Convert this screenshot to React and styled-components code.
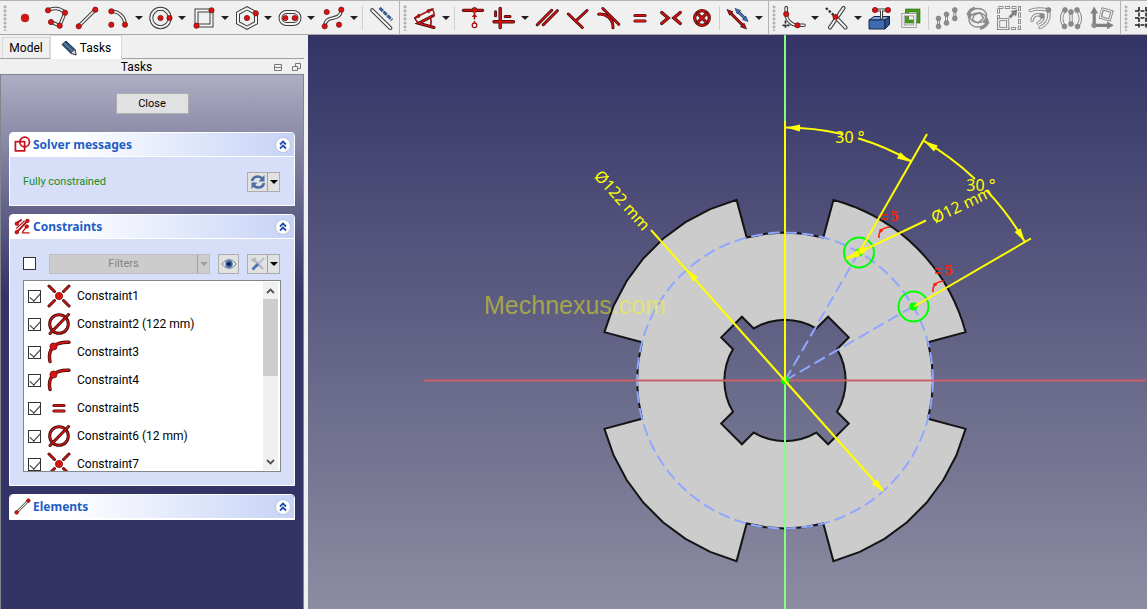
import React, { useState } from 'react';
import styled, { createGlobalStyle } from 'styled-components';

const GlobalStyle = createGlobalStyle`
  * {
    box-sizing: border-box;
  }

  html,
  body,
  #root {
    height: 100%;
    margin: 0;
  }

  body {
    overflow: hidden;
    background: #f0f0f0;
    color: #000;
    font-family: Roboto, 'Noto Sans', sans-serif;
    font-size: 11px;
    line-height: 16px;
  }

  button,
  input {
    font: inherit;
    color: inherit;
    margin: 0;
    padding: 0;
  }
`;

const Window = styled.div`
  display: flex;
  flex-direction: column;
  height: 100vh;
`;

/* ---------- toolbar ---------- */

const Toolbar = styled.header`
  display: flex;
  flex: none;
  height: 35px;
  overflow: hidden;
  border-top: 1px solid #b4b4b4;
  border-bottom: 1px solid #a8a8a8;
`;

const ToolGroup = styled.div`
  display: flex;
  flex: none;
  align-items: center;
  padding-right: 3px;
  border-right: 1px solid #b4b4b4;
`;

const Handle = styled.span`
  width: 9px;
  height: 26px;
  background: radial-gradient(circle at 5px 2px, #b4b4b4 1px, transparent 2px) 0 0 / 9px 4px;
`;

const ToolButton = styled.button`
  display: flex;
  flex: none;
  align-items: center;
  justify-content: center;
  width: 31px;
  height: 30px;
  border: 0;
  background: none;
`;

const ArrowButton = styled.button`
  display: flex;
  flex: none;
  align-items: center;
  justify-content: center;
  width: 12px;
  height: 30px;
  border: 0;
  background: none;

  &::before {
    content: '';
    border: 4px solid transparent;
    border-top-color: #202020;
    border-bottom: 0;
  }
`;

const ToolSeparator = styled.span`
  width: 1px;
  height: 24px;
  margin: 0 2px;
  background: #cfcfcf;
`;

const Main = styled.div`
  display: flex;
  flex: 1;
  min-height: 0;
`;

/* ---------- side panel ---------- */

const Sidebar = styled.aside`
  display: flex;
  flex: none;
  flex-direction: column;
  width: 304px;
`;

const Tabs = styled.div`
  display: flex;
  align-items: flex-end;
  height: 24px;
  padding-left: 2px;
  border-bottom: 1px solid #a0a0a0;
`;

const Tab = styled.button`
  display: flex;
  align-items: center;
  justify-content: center;
  gap: 3px;
  width: ${(p) => (p.$active ? '72px' : '48px')};
  height: ${(p) => (p.$active ? '24px' : '21px')};
  margin-bottom: ${(p) => (p.$active ? '-1px' : '0')};
  border: 1px solid #d9d9d9;
  border-bottom: 0;
  background: ${(p) => (p.$active ? '#fff' : '#f0f0f0')};
  font-size: 12px;
`;

const DockTitle = styled.div`
  display: grid;
  grid-template-columns: 1fr 30px;
  align-items: center;
  height: 15px;
  padding-right: 1px;
  font-size: 12px;
  text-align: center;
`;

const DockButtons = styled.div`
  display: flex;
  justify-content: space-between;
  height: 13px;
`;

const DockButton = styled.button`
  display: flex;
  align-items: center;
  width: 11px;
  border: 0;
  background: none;
`;

const TaskArea = styled.div`
  display: flex;
  flex: 1;
  flex-direction: column;
  gap: 8px;
  min-height: 0;
  padding: 18px 8px 0;
  border: 1px solid #84848c;
  border-bottom: 0;
  background: linear-gradient(#adadc3, #333366 220px);
`;

const CloseButton = styled.button`
  align-self: center;
  width: 73px;
  height: 21px;
  margin-bottom: 10px;
  border: 1px solid #adadad;
  background: #e1e1e1;
`;

const TaskBox = styled.section`
  border: 1px solid #fff;
  border-radius: 4px 4px 0 0;
  overflow: hidden;
  background: #d6dff7;
`;

const TaskHeader = styled.h2`
  display: flex;
  align-items: center;
  gap: 2px;
  height: 24px;
  margin: 0;
  padding: 0 3px 0 4px;
  border-bottom: 1px solid #fff;
  background: linear-gradient(90deg, #fff 20%, #c6d3f7);
  color: #215dc6;
  font-family: 'Noto Sans', sans-serif;
  font-size: 12px;
  font-weight: bold;
`;

const FoldButton = styled.button`
  display: flex;
  align-items: center;
  justify-content: center;
  width: 16px;
  height: 16px;
  margin-left: auto;
  border: 1px solid #b8c2e0;
  border-radius: 50%;
  background: #fff;
`;

const TaskBody = styled.div`
  padding: 14px 13px 13px;
`;

const Row = styled.div`
  display: flex;
  align-items: center;
  justify-content: space-between;
  min-height: 21px;
  padding-right: 1px;
`;

const SolverText = styled.p`
  margin: 0;
  color: #1c8a1c;
`;

const SplitButton = styled.div`
  display: flex;
  flex: none;
  width: 33px;
  height: 20px;
  border: 1px solid #adadad;
  background: #e1e1e1;
`;

const SplitMain = styled.button`
  display: flex;
  flex: 1;
  align-items: center;
  justify-content: center;
  border: 0;
  background: none;
`;

const SplitArrow = styled.button`
  display: flex;
  align-items: center;
  justify-content: center;
  width: 12px;
  border: 0;
  border-left: 1px solid #a0a0a0;
  background: none;

  &::before {
    content: '';
    border: 4px solid transparent;
    border-top-color: ${(p) => (p.disabled ? '#a0a0a0' : '#000')};
    border-bottom: 0;
  }
`;

const FilterBar = styled(Row)`
  margin-bottom: 6px;
`;

const FilterSplit = styled.div`
  display: flex;
  width: 161px;
  height: 20px;
  margin-left: 5px;
  border: 1px solid #bfbfbf;
  background: #cccccc;
  color: #838383;
`;

const EyeButton = styled.button`
  display: flex;
  align-items: center;
  justify-content: center;
  width: 21px;
  height: 20px;
  border: 1px solid #adadad;
  background: #e1e1e1;
`;

const Check = styled.input.attrs({ type: 'checkbox' })`
  appearance: none;
  display: flex;
  flex: none;
  justify-content: center;
  width: 13px;
  height: 13px;
  border: 1px solid #333;
  background: #fff;

  &:checked::before {
    content: '';
    width: 5px;
    height: 9px;
    border: solid #333;
    border-width: 0 1px 1px 0;
    transform: rotate(42deg);
  }
`;

const ListFrame = styled.div`
  display: flex;
  height: 192px;
  border: 1px solid #828790;
  background: #fff;
`;

const List = styled.ul`
  flex: 1;
  margin: 0;
  padding: 1px 0 0 4px;
  overflow: hidden;
  list-style: none;
`;

const ListRow = styled.label`
  display: flex;
  align-items: center;
  height: 28px;
  font-size: 12px;

  svg {
    margin: 0 6px;
  }
`;

const ScrollBar = styled.div`
  display: flex;
  flex-direction: column;
  width: 15px;
  margin: 1px 2px 1px 0;
  background: #f0f0f0;
`;

const ScrollButton = styled.button`
  display: flex;
  align-items: center;
  justify-content: center;
  height: 17px;
  border: 0;
  background: #f0f0f0;
`;

const Thumb = styled.div`
  height: 77px;
  margin-bottom: auto;
  background: #cdcdcd;
`;

const Viewport = styled.main`
  flex: 1;
  min-width: 0;
  margin-left: 4px;
  background: linear-gradient(#333366, #8c8ca2);
`;

const Drawing = styled.svg`
  display: block;
  width: 100%;
  height: 100%;
`;

const DimText = styled.text`
  fill: #ffff00;
  font-family: 'Noto Sans', sans-serif;
  font-size: 16px;
  text-anchor: middle;
`;

const MarkText = styled.text`
  fill: #ff2200;
  font-family: 'DejaVu Serif', serif;
  font-size: 13px;
  font-weight: bold;
`;

const Watermark = styled.text`
  fill: #ffff00;
  fill-opacity: 0.45;
  font-family: 'Liberation Sans', Arial, sans-serif;
  font-size: 25px;
`;

/* ---------- icon pieces ---------- */

const Icon = ({ size = 24, children }) => (
  <svg width={size} height={size} viewBox="0 0 24 24" fill="none" aria-hidden="true">
    {children}
  </svg>
);

// thick red stroke with a dark edge
const Red = ({ d, w = 3 }) => (
  <>
    <path d={d} stroke="#3a0808" strokeWidth={w} strokeLinecap="round" />
    <path d={d} stroke="#d01414" strokeWidth={w - 1.4} strokeLinecap="round" />
  </>
);

// hollow geometry stroke
const Bar = ({ d, w = 3.6, edge = '#3c3e3c', fill = '#f4f4f4' }) => (
  <>
    <path d={d} stroke={edge} strokeWidth={w} strokeLinecap="round" />
    <path d={d} stroke={fill} strokeWidth={w - 2} strokeLinecap="round" />
  </>
);

const Dots = ({ at, r = 2.6, fill = '#dc1212', edge = '#7a1010' }) =>
  at.map(([x, y]) => <circle key={`${x}-${y}`} cx={x} cy={y} r={r} fill={fill} stroke={edge} strokeWidth="0.8" />);

const Gray = ({ at }) => <Dots at={at} r={2.4} fill="#8c8c8c" edge="#808080" />;

const ICONS = {
  point: <circle cx="12" cy="12" r="4" fill="#d01212" stroke="#b03030" strokeWidth="0.6" />,
  polyline: (
    <>
      <Bar d="M4 4.3C9 1.5 16 1.6 21 6.7L15.7 19.7L7 16" />
      <Dots at={[[4, 4.3], [21, 6.7], [15.7, 19.7], [7, 16]]} />
    </>
  ),
  line: (
    <>
      <Bar d="M3.7 20.3L20.3 3.7" />
      <Dots at={[[3.7, 20.3], [20.3, 3.7]]} />
    </>
  ),
  arc: (
    <>
      <Bar d="M5.3 5.3C13 5.3 19 11 19 18.7" />
      <Dots at={[[5.3, 5.3], [5.3, 18.7], [19, 18.7]]} />
    </>
  ),
  circle: (
    <>
      <Bar d="M2.3 12a9.2 9.2 0 1 0 18.4 0a9.2 9.2 0 1 0 -18.4 0" w={4} />
      <Dots at={[[11.5, 12], [20.5, 12]]} />
    </>
  ),
  square: (
    <>
      <Bar d="M4.5 4.5H19.5V19.5H4.5Z" w={4} />
      <Dots at={[[19.5, 4.3], [4.5, 19.7]]} />
    </>
  ),
  hexagon: (
    <>
      <Bar d="M12 2.3L21 7.2V16.8L12 21.7L3 16.8V7.2Z" w={4} />
      <Dots at={[[12, 12], [20.8, 7.3]]} />
    </>
  ),
  slot: (
    <>
      <Bar d="M8.5 6H15.5a6 6 0 0 1 0 12H8.5a6 6 0 0 1 0 -12Z" w={4} />
      <Dots at={[[7.3, 12], [16.7, 12]]} />
    </>
  ),
  spline: (
    <>
      <Bar d="M3.7 20.3C5 7 19 17 20.3 3.7" />
      <Dots at={[[3.7, 20.3], [5.7, 6], [20.3, 3.7], [18, 18.7]]} />
    </>
  ),
  construction: (
    <>
      <Bar d="M3.2 4.2L21.3 22" w={4} />
      <path d="M10.7 2L23 14" stroke="#1c3560" strokeWidth="2.8" strokeDasharray="4.4 1" />
      <path d="M10.7 2L23 14" stroke="#3f6fb5" strokeWidth="1.4" strokeDasharray="4.4 1" />
    </>
  ),
  dimension: (
    <>
      <path d="M1.5 12L19.5 3M1.5 12L5 17M19.5 3L21.5 8" stroke="#a01010" strokeWidth="1.4" />
      <path d="M1 12.5L6 7.8L7 11Z M20.5 2.6L13.8 4L15.4 7Z" fill="#c01010" stroke="#5a0808" strokeWidth="0.6" />
      <path d="M17.5 11.5Q18.8 15.5 17.5 20" stroke="#a01010" strokeWidth="1.6" />
      <Red d="M20.5 9.5L5.5 17.3L21 21.5" />
    </>
  ),
  pointOnLine: (
    <>
      <path d="M13.5 7V16.5" stroke="#8a1010" strokeWidth="1.4" strokeDasharray="2.5 1.5" />
      <path d="M13.5 7.2L10.8 11H16.2Z" fill="#c01010" />
      <circle cx="13.5" cy="19.3" r="2.3" fill="#fff" stroke="#a01414" strokeWidth="1.3" />
      <Red d="M2.5 4.3H21.5" w={3.2} />
      <Dots at={[[13.5, 4]]} />
    </>
  ),
  horVer: (
    <>
      <Red d="M8.2 2.5V21.5M2 15.7H21.5" w={3.4} />
      <Red d="M3.5 5.8V9.8M13.2 10.5H18" />
    </>
  ),
  parallel: <Red d="M2.3 18.7L16.7 4.3M8.3 18.7L22.3 4.7" />,
  perpendicular: <Red d="M2.3 8L16.3 21.5M9.8 15L21 4.5" />,
  tangent: <Red d="M1.7 8.2C8 7.5 16.5 12 16 21.8M5.8 2.5L21.8 18.3" />,
  equal: <Red d="M7 9.5H17M7 15H17" w={3.2} />,
  symmetric: <Red d="M2.7 6.5L9.2 12L2.7 17.5M21.3 6.5L14.8 12L21.3 17.5" w={3.2} />,
  block: (
    <>
      <circle cx="12" cy="12" r="7.3" stroke="#3a0808" strokeWidth="3.2" />
      <circle cx="12" cy="12" r="7.3" stroke="#d01414" strokeWidth="1.8" />
      <Red d="M7.6 7.6L16.4 16.4M16.4 7.6L7.6 16.4" />
    </>
  ),
  toggle: (
    <>
      <Red d="M3.5 6L18 20.5" />
      <path d="M1 3.5L7 5.8L3.6 9.2Z M20.5 23L14.5 20.8L18 17.2Z" fill="#c01212" stroke="#3a0808" strokeWidth="0.7" />
      <path d="M11.5 5L19.5 13" stroke="#1c3560" strokeWidth="3" />
      <path d="M11.5 5L19.5 13" stroke="#5580c0" strokeWidth="1.6" />
      <path d="M9 2.5L14.5 4.4L11.2 7.7Z M22 15.5L16.5 13.6L19.8 10.3Z" fill="#4474b8" stroke="#1c3560" strokeWidth="0.7" />
    </>
  ),
  fillet: (
    <>
      <Bar d="M4.2 1.7V8C4.5 14 9 19 15.5 19.3H22" />
      <path d="M3.5 14.5V23M0.5 19.3H9" stroke="#303030" strokeWidth="1.8" strokeDasharray="3 1.2" />
      <Dots at={[[4.2, 8], [15.5, 19.3]]} />
    </>
  ),
  trim: (
    <>
      <path d="M1 2L10 10.5" stroke="#303030" strokeWidth="2.4" strokeDasharray="2.4 1.6" />
      <Bar d="M18.5 2L5 21.5M10.5 11L20.5 21.5" w={4} />
      <Dots at={[[10.5, 11]]} />
    </>
  ),
  external: (
    <>
      <path d="M1 14L6 10.5H21.5L17 14Z" fill="#7fa6da" stroke="#15294d" />
      <path d="M1 14H17V23H1Z" fill="#3f6cb0" stroke="#15294d" />
      <path d="M17 14L21.5 10.5V18.5L17 23Z" fill="#2c4f87" stroke="#15294d" />
      <Bar d="M7 4H20M13.5 4V12" w={3} />
      <Dots at={[[7, 4], [20, 4]]} />
    </>
  ),
  carbonCopy: (
    <>
      <rect x="8" y="4.5" width="11.5" height="11" stroke="#2c6a10" strokeWidth="3.6" />
      <rect x="8" y="4.5" width="11.5" height="11" stroke="#45a01c" strokeWidth="2.2" />
      <rect x="4" y="8.7" width="12" height="11.5" stroke="#8a8a8a" strokeWidth="3.2" />
      <rect x="4" y="8.7" width="12" height="11.5" stroke="#f4f4f4" strokeWidth="1.6" />
    </>
  ),
  copies: (
    <>
      <Bar d="M3.5 12V20.5M11.5 8V17M19.8 4V12.5" w={3} edge="#8c8c8c" />
      <Gray at={[[3.5, 12.5], [3.5, 20.5], [11.5, 8.3], [11.5, 17], [19.8, 4], [19.8, 12.5]]} />
    </>
  ),
  rotate: (
    <>
      <ellipse cx="12" cy="9.5" rx="8.5" ry="7" stroke="#8c8c8c" strokeWidth="1.4" />
      <ellipse cx="12" cy="14" rx="9" ry="7" stroke="#8c8c8c" strokeWidth="1.4" />
      <path d="M8 9L14 6.5L17.5 12L12 17L6.5 14Z" stroke="#8c8c8c" strokeWidth="1.4" />
      <path d="M2 8Q4 2.5 9 2M22 16Q20 21.5 14 22.5" stroke="#8c8c8c" strokeWidth="2.4" />
      <path d="M0.5 7L7.5 8L2.5 13Z M23.5 17.5L16.5 17L21.5 11.5Z" fill="#8c8c8c" />
    </>
  ),
  scale: (
    <>
      <rect x="1.5" y="1.5" width="21" height="21" stroke="#8c8c8c" strokeWidth="3" strokeDasharray="5 1.5" />
      <rect x="1.5" y="1.5" width="21" height="21" stroke="#f4f4f4" strokeWidth="1" strokeDasharray="3.5 3" strokeDashoffset="-0.8" />
      <rect x="1.7" y="13.5" width="9" height="9" fill="#f0f0f0" stroke="#858585" strokeWidth="3" />
      <rect x="1.7" y="13.5" width="9" height="9" stroke="#f4f4f4" strokeWidth="1.2" />
      <path d="M12.5 11.5L17 7" stroke="#808080" strokeWidth="3" />
      <path d="M20.5 3.5L19 10.5L13.5 5Z" fill="#808080" />
    </>
  ),
  offset: (
    <>
      <Bar d="M2.5 4.5C7 2.5 13 2.5 20.5 4C22 11 20 18 12 21.5" w={3.4} edge="#8c8c8c" />
      <Bar d="M4 14.5C5 8.5 9 8 14 9.5C16 12 14 15.5 10 17" w={3.4} edge="#8c8c8c" />
      <Gray at={[[20.5, 4], [14, 9.8]]} />
    </>
  ),
  mirror: (
    <>
      <Bar d="M6 4Q-0.5 12 5.5 20.5M18 4Q24.5 12 18.5 20.5M12 6V18" w={3.4} edge="#8c8c8c" />
      <Gray at={[[6, 4], [5.5, 20.5], [18, 4], [18.5, 20.5], [12, 6], [12, 18]]} />
    </>
  ),
  axes: (
    <>
      <path d="M4.2 5V19.3H19" stroke="#808080" strokeWidth="3.2" />
      <path d="M4.2 0.5L8 7.5H0.4Z M23.8 19.3L17 15.4V23.2Z" fill="#808080" />
      <Bar d="M12.5 3L22 5.5L19.5 14L10.5 11.5Z" w={3} edge="#8c8c8c" />
      <Gray at={[[4.2, 19.3]]} />
    </>
  ),
  grid: <path d="M5 1V23M12 1V23M19 1V23M1 5H23M1 12H23M1 19H23" stroke="#222" strokeWidth="1.6" strokeDasharray="4 1.5" />,
  coincident: (
    <>
      <Red d="M2 2L7.5 7.5M22 2L16.5 7.5M2 22L7.5 16.5M22 22L16.5 16.5" />
      <Dots at={[[12, 12]]} r={3.6} />
    </>
  ),
  diameter: (
    <>
      <circle cx="12" cy="12" r="9.3" stroke="#3a0808" strokeWidth="3" />
      <circle cx="12" cy="12" r="9.3" stroke="#d01414" strokeWidth="1.5" />
      <Red d="M3 21.5L21.5 2.5" />
    </>
  ),
  tangentArc: (
    <>
      <Red d="M22 2.3C13 2 9 4 6.5 6.5C2 11 2 17 3 21.5" w={3.4} />
      <Dots at={[[6.5, 6.5]]} r={3.6} />
    </>
  ),
  sketch: (
    <g stroke="#c8101c" strokeWidth="2.4">
      <rect x="2" y="8" width="13" height="13" />
      <circle cx="15" cy="8.5" r="6.8" />
    </g>
  ),
  constraints: (
    <>
      <path d="M3 8L11 2M3 21L20 3" stroke="#a01010" strokeWidth="2.6" />
      <path d="M3 15L15 4M12 20L19 10M11 21H22" stroke="#c01414" strokeWidth="1.8" />
      <Dots at={[[4, 8], [4, 20], [19, 4], [18, 12]]} r={2.6} />
    </>
  ),
};

const DRAW_TOOLS = [
  ['point', 'Point'],
  ['polyline', 'Polyline'],
  ['line', 'Line'],
  ['arc', 'Arc', true],
  ['circle', 'Circle', true],
  ['square', 'Rectangle', true],
  ['hexagon', 'Polygon', true],
  ['slot', 'Slot', true],
  ['spline', 'B-spline', true],
  null,
  ['construction', 'Toggle construction'],
];

const CONSTRAINT_TOOLS = [
  ['dimension', 'Dimension', true],
  null,
  ['pointOnLine', 'Point on object'],
  ['horVer', 'Horizontal or vertical', true],
  ['parallel', 'Parallel'],
  ['perpendicular', 'Perpendicular'],
  ['tangent', 'Tangent'],
  ['equal', 'Equal'],
  ['symmetric', 'Symmetric'],
  ['block', 'Block'],
  null,
  ['toggle', 'Toggle driving', true],
];

const EDIT_TOOLS = [
  ['fillet', 'Fillet', true],
  ['trim', 'Trim', true],
  ['external', 'External geometry'],
  ['carbonCopy', 'Carbon copy'],
  null,
  ['copies', 'Move or array'],
  ['rotate', 'Rotate'],
  ['scale', 'Scale'],
  ['offset', 'Offset'],
  ['mirror', 'Mirror'],
  ['axes', 'Remove axes alignment'],
];

const CONSTRAINTS = [
  { name: 'Constraint1', icon: 'coincident' },
  { name: 'Constraint2 (122 mm)', icon: 'diameter' },
  { name: 'Constraint3', icon: 'tangentArc' },
  { name: 'Constraint4', icon: 'tangentArc' },
  { name: 'Constraint5', icon: 'equal' },
  { name: 'Constraint6 (12 mm)', icon: 'diameter' },
  { name: 'Constraint7', icon: 'coincident' },
];

const Tools = ({ items }) => (
  <ToolGroup>
    <Handle />
    {items.map((item, i) => {
      if (!item) return <ToolSeparator key={i} />;
      const [icon, label, menu] = item;
      return (
        <React.Fragment key={icon}>
          <ToolButton aria-label={label}>
            <Icon>{ICONS[icon]}</Icon>
          </ToolButton>
          {menu && <ArrowButton aria-label={`${label} options`} />}
        </React.Fragment>
      );
    })}
  </ToolGroup>
);

/* ---------- 3D view ---------- */

const CX = 785;
const CY = 380.5;

// angle runs clockwise from the vertical axis
const polar = (r, deg) => {
  const a = (deg * Math.PI) / 180;
  return [CX + r * Math.sin(a), CY - r * Math.cos(a)];
};

const arcPoints = (r, from, to, steps) =>
  Array.from({ length: steps + 1 }, (_, i) => polar(r, from + ((to - from) * i) / steps));

const toPath = (points) => `M${points.map((p) => p.map((n) => n.toFixed(1)).join(' ')).join('L')}Z`;

const partOutline = () => {
  const outer = [0, 90, 180, 270].flatMap((base) => [
    ...arcPoints(148, base - 15, base + 15, 4),
    ...arcPoints(187, base + 15, base + 75, base === 0 ? 18 : 7),
  ]);
  const inner = [0, 90, 180, 270].flatMap((base) => [
    ...arcPoints(60.7, base - 31, base + 31, 8),
    polar(77, base + 34),
    polar(77, base + 56),
  ]);
  return toPath(outer) + toPath(inner);
};

const arcLine = (r, from, to) => {
  const [x1, y1] = polar(r, from);
  const [x2, y2] = polar(r, to);
  return `M${x1} ${y1}A${r} ${r} 0 0 1 ${x2} ${y2}`;
};

const ArrowHead = ({ x, y, angle }) => (
  <path d="M0 0L-14 -3.5L-14 3.5Z" fill="#ffff00" transform={`translate(${x} ${y}) rotate(${angle})`} />
);

const EqualMark = ({ x, y }) => (
  <g transform={`translate(${x} ${y})`}>
    <path d="M0 3H7M0 7H7" stroke="#ff2200" strokeWidth="1.5" />
    <MarkText x="9" y="9">5</MarkText>
    <path d="M-2 26Q-3 16 9 15" fill="none" stroke="#ff2200" strokeWidth="1.6" />
    <circle cx="0" cy="18.5" r="1.8" fill="#ff2200" />
  </g>
);

const SketchView = () => (
  <Drawing viewBox="308 35 839 574" preserveAspectRatio="xMidYMid slice" role="img" aria-label="Sketch view">
    <path d={partOutline()} fill="#cccccc" fillRule="evenodd" stroke="#141414" strokeWidth="2" />
    <g fill="none" stroke="#91a7ff" strokeWidth="2" strokeDasharray="12 5">
      <circle cx={CX} cy={CY} r="148" />
      <path d="M785 380.5L859 252M785 380.5L913 306.5" />
    </g>
    <path d="M424 380.5H1146" stroke="#cc5f66" strokeWidth="2" />
    <path d="M785 35V609" stroke="#80ff80" strokeWidth="2" />
    <g fill="none" stroke="#00ff00" strokeWidth="2">
      <circle cx="859" cy="252.5" r="15" />
      <circle cx="913.5" cy="306.5" r="15" />
    </g>
    <g fill="#00ff00">
      <circle cx={CX} cy={CY} r="4" />
      <circle cx="859" cy="252.5" r="4" />
      <circle cx="913.5" cy="306.5" r="4" />
    </g>
    <EqualMark x={881} y={212} />
    <EqualMark x={935} y={266} />
    <g fill="none" stroke="#ffff00" strokeWidth="2">
      <path d="M785 380.5V121" />
      <path d="M860 251L927 134" />
      <path d="M914 306.5L1031 238.5" />
      <path d="M846 258.5L926 220.5" />
      <path d="M651 230L883 491" />
      <path d={arcLine(253, 0, 13)} />
      <path d={arcLine(253, 16.8, 30)} />
      <path d={arcLine(277, 30, 43.3)} />
      <path d={arcLine(277, 46.6, 60)} />
    </g>
    <ArrowHead x={786} y={127.5} angle={182} />
    <ArrowHead x={911} y={162} angle={28} />
    <ArrowHead x={924} y={141} angle={212} />
    <ArrowHead x={1025} y={242} angle={58} />
    <ArrowHead x={846} y={259} angle={155} />
    <ArrowHead x={872} y={246} angle={335} />
    <ArrowHead x={686} y={269} angle={228} />
    <ArrowHead x={884} y={492} angle={48} />
    <DimText x="850" y="143">30 °</DimText>
    <DimText x="981" y="191">30 °</DimText>
    <DimText transform="translate(618 204) rotate(48)">Ø122 mm</DimText>
    <DimText transform="translate(964 210) rotate(-25)">Ø12 mm</DimText>
    <Watermark x="484" y="314">Mechnexus.com</Watermark>
  </Drawing>
);

const TaskSection = ({ icon, title, children }) => {
  const [open, setOpen] = useState(true);
  return (
    <TaskBox>
      <TaskHeader>
        <Icon size={17}>{ICONS[icon]}</Icon>
        {title}
        <FoldButton aria-label={`Fold ${title}`} onClick={() => setOpen(!open)}>
          <svg width="8" height="10" viewBox="0 0 8 10" fill="none" stroke="#1e4fae" strokeWidth="1.8">
            <path d="M1 4.5L4 1.5L7 4.5M1 8.5L4 5.5L7 8.5" />
          </svg>
        </FoldButton>
      </TaskHeader>
      {open && children && <TaskBody>{children}</TaskBody>}
    </TaskBox>
  );
};

function App() {
  const [checked, setChecked] = useState(CONSTRAINTS.map((c) => c.name));

  const onToggle = (name) => {
    setChecked((prev) => (prev.includes(name) ? prev.filter((n) => n !== name) : [...prev, name]));
  };

  return (
    <Window>
      <GlobalStyle />
      <Toolbar>
        <Tools items={DRAW_TOOLS} />
        <Tools items={CONSTRAINT_TOOLS} />
        <Tools items={EDIT_TOOLS} />
        <Tools items={[['grid', 'Toggle grid', true]]} />
      </Toolbar>
      <Main>
        <Sidebar>
          <Tabs>
            <Tab>Model</Tab>
            <Tab $active>
              <svg width="16" height="16" viewBox="0 0 16 16" aria-hidden="true">
                <path d="M1 4.5L5 1L14 9.5L15 15L9.5 13Z" fill="#2f5376" stroke="#1b2f44" />
                <path d="M3 3L12 11.5" stroke="#5d86ad" strokeWidth="1.5" />
                <path d="M9.5 13L14 9.5L15 15Z" fill="#d8d8d8" stroke="#333" strokeWidth="0.7" />
              </svg>
              Tasks
            </Tab>
          </Tabs>
          <DockTitle>
            Tasks
            <DockButtons>
              <DockButton aria-label="Collapse">
                <svg width="9" height="9" fill="none" stroke="#777">
                  <path d="M1.5 1.5H8.5V7.5H1.5ZM1.5 4.5H8.5" />
                </svg>
              </DockButton>
              <DockButton aria-label="Float">
                <svg width="9" height="9" fill="none" stroke="#777">
                  <path d="M3.5 3.5V0.5H8.5V5.5H5.5M0.5 3.5H5.5V7.5H0.5Z" />
                </svg>
              </DockButton>
            </DockButtons>
          </DockTitle>
          <TaskArea>
            <CloseButton>Close</CloseButton>
            <TaskSection icon="sketch" title="Solver messages">
              <Row>
                <SolverText>Fully constrained</SolverText>
                <SplitButton>
                  <SplitMain aria-label="Update">
                    <svg width="16" height="16" viewBox="0 0 16 16" fill="none">
                      <path d="M2 7Q3 2.5 8 2.5Q10.5 2.5 12 4.5M14 9Q13 13.5 8 13.5Q5.5 13.5 4 11.5" stroke="#4a6fa5" strokeWidth="2.6" />
                      <path d="M14.5 1V7.5H8.5ZM1.5 15V8.5H7.5Z" fill="#4a6fa5" />
                    </svg>
                  </SplitMain>
                  <SplitArrow aria-label="Update options" />
                </SplitButton>
              </Row>
            </TaskSection>
            <TaskSection icon="constraints" title="Constraints">
              <FilterBar>
                <Check aria-label="Enable filters" />
                <FilterSplit>
                  <SplitMain disabled>Filters</SplitMain>
                  <SplitArrow disabled aria-label="Filter options" />
                </FilterSplit>
                <EyeButton aria-label="Show or hide">
                  <svg width="16" height="12" viewBox="0 0 16 12">
                    <path d="M0.7 6Q8 -3 15.3 6Q8 15 0.7 6Z" fill="#e8ecf0" stroke="#6e7c88" />
                    <circle cx="8" cy="6" r="3.8" fill="#3a66ae" />
                    <circle cx="8" cy="6" r="1.7" fill="#101820" />
                  </svg>
                </EyeButton>
                <SplitButton>
                  <SplitMain aria-label="Settings">
                    <svg width="16" height="16" viewBox="0 0 16 16" fill="none">
                      <path d="M3 3L13 13" stroke="#b4b8bd" strokeWidth="2.4" />
                      <path d="M1.5 2.5L3 5L5.5 4.5L4.5 1.5" stroke="#b4b8bd" strokeWidth="1.6" />
                      <path d="M14 2L8 8" stroke="#aab4c4" strokeWidth="1.6" />
                      <path d="M8 8L2.5 13.5" stroke="#4c74b4" strokeWidth="3" />
                    </svg>
                  </SplitMain>
                  <SplitArrow aria-label="Settings options" />
                </SplitButton>
              </FilterBar>
              <ListFrame>
                <List>
                  {CONSTRAINTS.map(({ name, icon }) => (
                    <li key={name}>
                      <ListRow>
                        <Check checked={checked.includes(name)} onChange={() => onToggle(name)} />
                        <Icon>{ICONS[icon]}</Icon>
                        {name}
                      </ListRow>
                    </li>
                  ))}
                </List>
                <ScrollBar>
                  <ScrollButton aria-label="Scroll up">
                    <svg width="9" height="6" fill="none" stroke="#555" strokeWidth="1.8">
                      <path d="M1 5L4.5 1.5L8 5" />
                    </svg>
                  </ScrollButton>
                  <Thumb />
                  <ScrollButton aria-label="Scroll down">
                    <svg width="9" height="6" fill="none" stroke="#555" strokeWidth="1.8">
                      <path d="M1 1L4.5 4.5L8 1" />
                    </svg>
                  </ScrollButton>
                </ScrollBar>
              </ListFrame>
            </TaskSection>
            <TaskSection icon="line" title="Elements" />
          </TaskArea>
        </Sidebar>
        <Viewport>
          <SketchView />
        </Viewport>
      </Main>
    </Window>
  );
}

export default App;
